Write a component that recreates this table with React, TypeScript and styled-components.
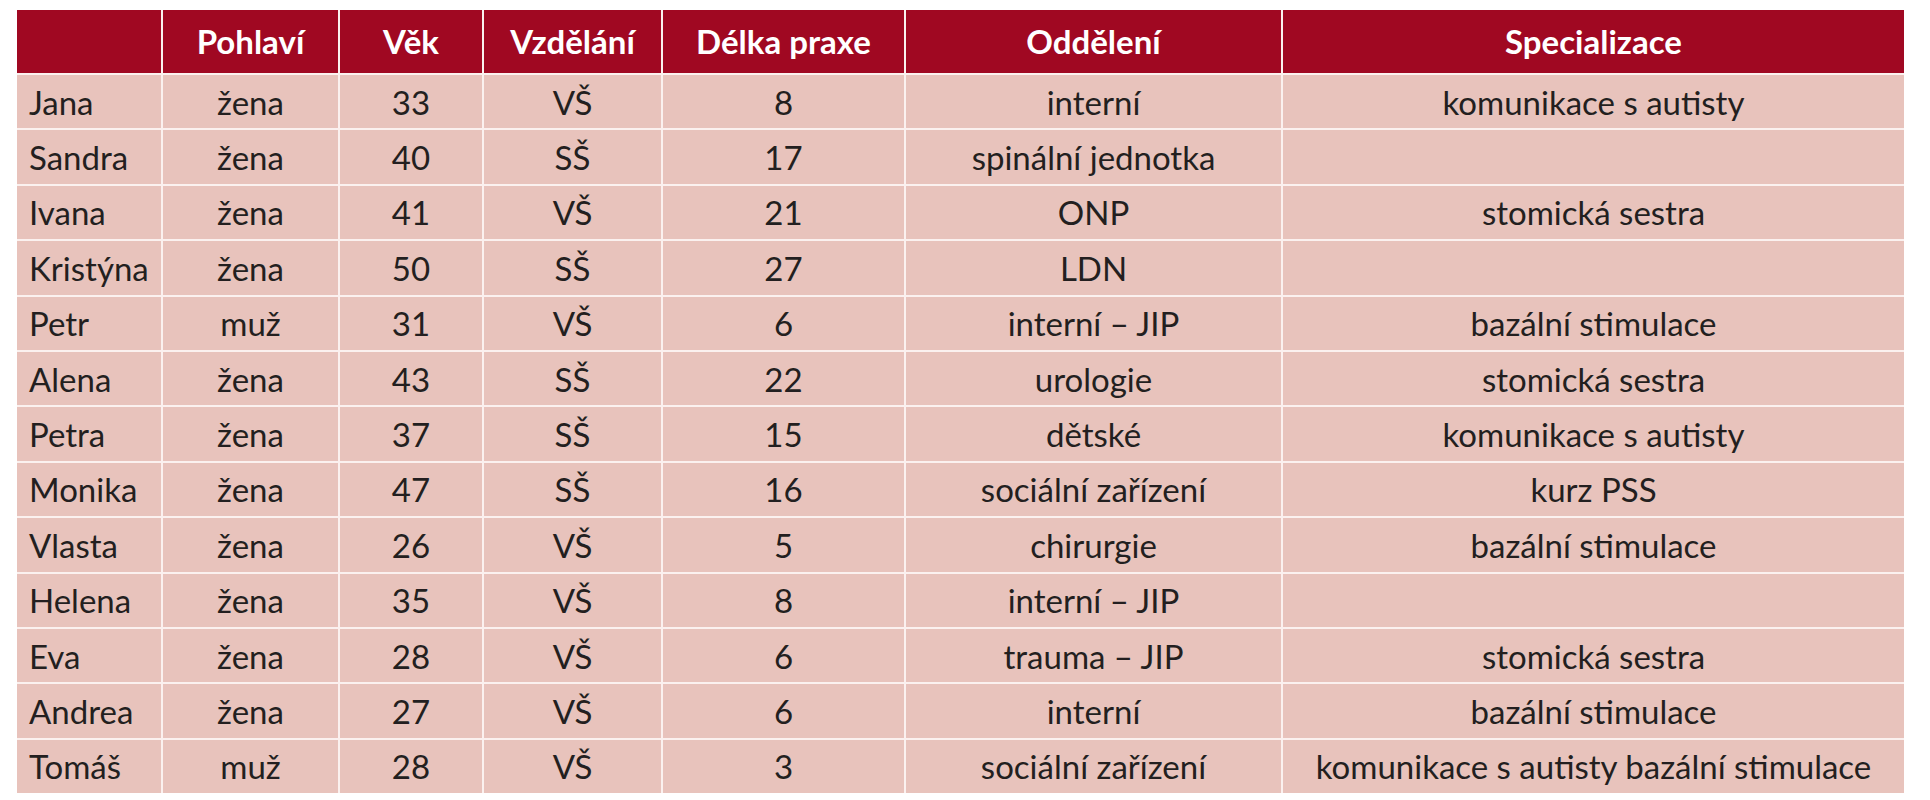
import React from 'react';
import styled, { createGlobalStyle } from 'styled-components';

type Row = {
  name: string;
  sex: string;
  age: number;
  education: string;
  practice: number;
  department: string;
  specialization: string;
};

const columns = ['', 'Pohlaví', 'Věk', 'Vzdělání', 'Délka praxe', 'Oddělení', 'Specializace'];

const rows: Row[] = [
  { name: 'Jana', sex: 'žena', age: 33, education: 'VŠ', practice: 8, department: 'interní', specialization: 'komunikace s autisty' },
  { name: 'Sandra', sex: 'žena', age: 40, education: 'SŠ', practice: 17, department: 'spinální jednotka', specialization: '' },
  { name: 'Ivana', sex: 'žena', age: 41, education: 'VŠ', practice: 21, department: 'ONP', specialization: 'stomická sestra' },
  { name: 'Kristýna', sex: 'žena', age: 50, education: 'SŠ', practice: 27, department: 'LDN', specialization: '' },
  { name: 'Petr', sex: 'muž', age: 31, education: 'VŠ', practice: 6, department: 'interní – JIP', specialization: 'bazální stimulace' },
  { name: 'Alena', sex: 'žena', age: 43, education: 'SŠ', practice: 22, department: 'urologie', specialization: 'stomická sestra' },
  { name: 'Petra', sex: 'žena', age: 37, education: 'SŠ', practice: 15, department: 'dětské', specialization: 'komunikace s autisty' },
  { name: 'Monika', sex: 'žena', age: 47, education: 'SŠ', practice: 16, department: 'sociální zařízení', specialization: 'kurz PSS' },
  { name: 'Vlasta', sex: 'žena', age: 26, education: 'VŠ', practice: 5, department: 'chirurgie', specialization: 'bazální stimulace' },
  { name: 'Helena', sex: 'žena', age: 35, education: 'VŠ', practice: 8, department: 'interní – JIP', specialization: '' },
  { name: 'Eva', sex: 'žena', age: 28, education: 'VŠ', practice: 6, department: 'trauma – JIP', specialization: 'stomická sestra' },
  { name: 'Andrea', sex: 'žena', age: 27, education: 'VŠ', practice: 6, department: 'interní', specialization: 'bazální stimulace' },
  { name: 'Tomáš', sex: 'muž', age: 28, education: 'VŠ', practice: 3, department: 'sociální zařízení', specialization: 'komunikace s autisty bazální stimulace' },
];

export default function App(): JSX.Element {
  return (
    <>
      <GlobalStyle />
      <Page>
        <Table>
          {columns.map((title, i) => (
            <HeadCell key={`h-${i}`}>{title}</HeadCell>
          ))}

          {rows.map((row) => (
            <React.Fragment key={row.name}>
              <Cell $left>{row.name}</Cell>
              <Cell>{row.sex}</Cell>
              <Cell>{row.age}</Cell>
              <Cell>{row.education}</Cell>
              <Cell>{row.practice}</Cell>
              <Cell>{row.department}</Cell>
              <Cell>{row.specialization}</Cell>
            </React.Fragment>
          ))}
        </Table>
      </Page>
    </>
  );
}

const GlobalStyle = createGlobalStyle`
  html, body {
    margin: 0;
    padding: 0;
    background: #fff;
  }
`;

const Page = styled.div`
  padding: 10px 0 0 17px;
  font-family: Lato, 'Liberation Sans', sans-serif;
`;

const Table = styled.div`
  display: grid;
  grid-template-columns: 144px 175px 142px 177px 241px 375px 621px;
  grid-template-rows: 63px;
  grid-auto-rows: 53.4px;
  gap: 2px;
  width: max-content;
  background: #fbf1ef;
`;

const HeadCell = styled.div`
  display: flex;
  align-items: center;
  justify-content: center;
  padding-bottom: 2px;
  background: #a00822;
  color: #fff;
  font-size: 33px;
  font-weight: 700;
  white-space: nowrap;
`;

const Cell = styled.div<{ $left?: boolean }>`
  display: flex;
  align-items: center;
  justify-content: ${(p) => (p.$left ? 'flex-start' : 'center')};
  padding: 0 ${(p) => (p.$left ? '12px' : '0')};
  background: #e8c3bc;
  color: #231f20;
  font-size: 33px;
  white-space: nowrap;
`;
